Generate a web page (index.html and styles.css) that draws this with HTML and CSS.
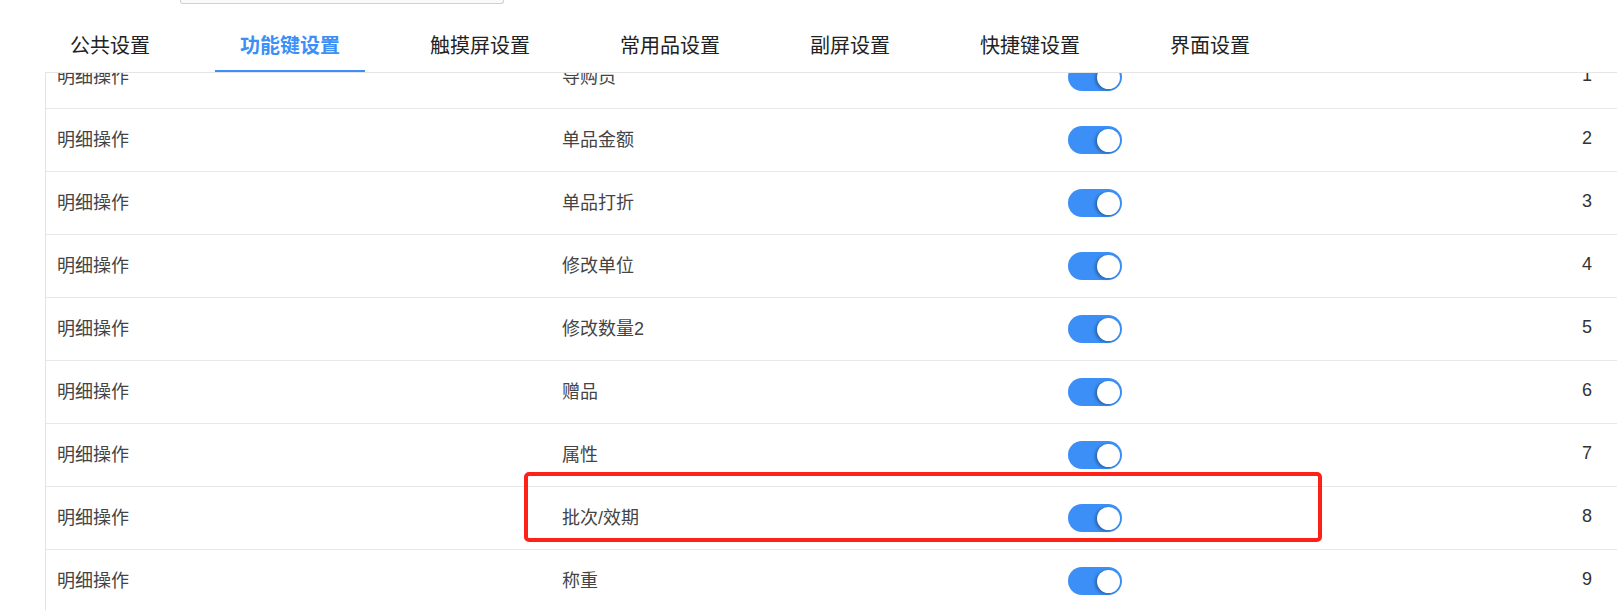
FILE: index.html
```html
<html>
  <head>
    <title>功能键设置</title>
    <meta charset="utf-8" />
    <meta name="viewport" content="width=device-width, initial-scale=1" />
    <link rel="stylesheet" href="styles.css">
  </head>
  <body>
    <div class="search"></div>

    <div class="tabs">
      <div class="tab">公共设置</div>
      <div class="tab active">功能键设置</div>
      <div class="tab">触摸屏设置</div>
      <div class="tab">常用品设置</div>
      <div class="tab">副屏设置</div>
      <div class="tab">快捷键设置</div>
      <div class="tab">界面设置</div>
    </div>

    <div class="table-wrap">
      <div class="table">
        <div class="row"><div class="cell txt">明细操作</div><div class="cell txt">导购员</div><div class="cell"><span class="switch"><span class="knob"></span></span></div><div class="cell txt num">1</div></div>
        <div class="row"><div class="cell txt">明细操作</div><div class="cell txt">单品金额</div><div class="cell"><span class="switch"><span class="knob"></span></span></div><div class="cell txt num">2</div></div>
        <div class="row"><div class="cell txt">明细操作</div><div class="cell txt">单品打折</div><div class="cell"><span class="switch"><span class="knob"></span></span></div><div class="cell txt num">3</div></div>
        <div class="row"><div class="cell txt">明细操作</div><div class="cell txt">修改单位</div><div class="cell"><span class="switch"><span class="knob"></span></span></div><div class="cell txt num">4</div></div>
        <div class="row"><div class="cell txt">明细操作</div><div class="cell txt">修改数量2</div><div class="cell"><span class="switch"><span class="knob"></span></span></div><div class="cell txt num">5</div></div>
        <div class="row"><div class="cell txt">明细操作</div><div class="cell txt">赠品</div><div class="cell"><span class="switch"><span class="knob"></span></span></div><div class="cell txt num">6</div></div>
        <div class="row"><div class="cell txt">明细操作</div><div class="cell txt">属性</div><div class="cell"><span class="switch"><span class="knob"></span></span></div><div class="cell txt num">7</div></div>
        <div class="row"><div class="cell txt">明细操作</div><div class="cell txt">批次/效期</div><div class="cell"><span class="switch"><span class="knob"></span></span></div><div class="cell txt num">8</div></div>
        <div class="row"><div class="cell txt">明细操作</div><div class="cell txt">称重</div><div class="cell"><span class="switch"><span class="knob"></span></span></div><div class="cell txt num">9</div></div>
        <div class="row"><div class="cell txt">明细操作</div><div class="cell txt">折扣</div><div class="cell"><span class="switch"><span class="knob"></span></span></div><div class="cell txt num">10</div></div>
      </div>
    </div>

    <!-- annotation -->
    <div class="mark"></div>
  </body>
</html>
```

FILE: styles.css
```css
      html, body {
        height: 100%;
        overflow: hidden;
      }

      body {
        margin: 0;
        position: relative;
        font-family: "Liberation Sans", "Noto Sans CJK SC", sans-serif;
        font-size: 18px;
        color: #444;
        background: #fff;
      }

      .search {
        margin-left: 180px;
        width: 322px;
        height: 3px;
        border: 1px solid #d2d2d2;
        border-top: none;
        border-radius: 0 0 3px 3px;
        background: #fafafa;
      }

      .tabs {
        display: flex;
        gap: 40px;
        margin-top: 18px;
        padding-left: 45px;
      }

      .tab {
        padding: 0 25px;
        height: 48px;
        line-height: 48px;
        font-size: 20px;
        color: #222;
        border-bottom: 2px solid transparent;
      }

      .tab.active {
        color: #3b8ff6;
        font-weight: bold;
        border-bottom-color: #3b8ff6;
      }

      .table-wrap {
        margin-left: 45px;
        border-left: 1px solid #e2e2e2;
        border-top: 1px solid #e6e6e6;
        height: 600px;
        overflow: hidden;
      }

      .table {
        margin-top: -27px;
      }

      .row {
        display: grid;
        grid-template-columns: 505px 506px 1fr auto;
        align-items: center;
        height: 62px;
        border-bottom: 1px solid #e8e8e8;
      }

      .cell {
        padding-left: 11px;
      }

      .txt {
        padding-bottom: 4px;
      }

      .num {
        padding-right: 25px;
        color: #333;
        text-align: right;
      }

      .switch {
        display: flex;
        justify-content: flex-end;
        align-items: center;
        width: 54px;
        height: 28px;
        padding: 0 2px;
        box-sizing: border-box;
        border-radius: 14px;
        background: #3b8ff6;
      }

      .knob {
        width: 23px;
        height: 23px;
        border-radius: 50%;
        background: #fff;
        box-shadow: -2px 1px 3px rgba(0, 0, 0, 0.3);
      }

      .mark {
        position: absolute;
        left: 524px;
        top: 472px;
        width: 790px;
        height: 62px;
        border: 4px solid #fe2118;
        border-radius: 5px;
      }
```
